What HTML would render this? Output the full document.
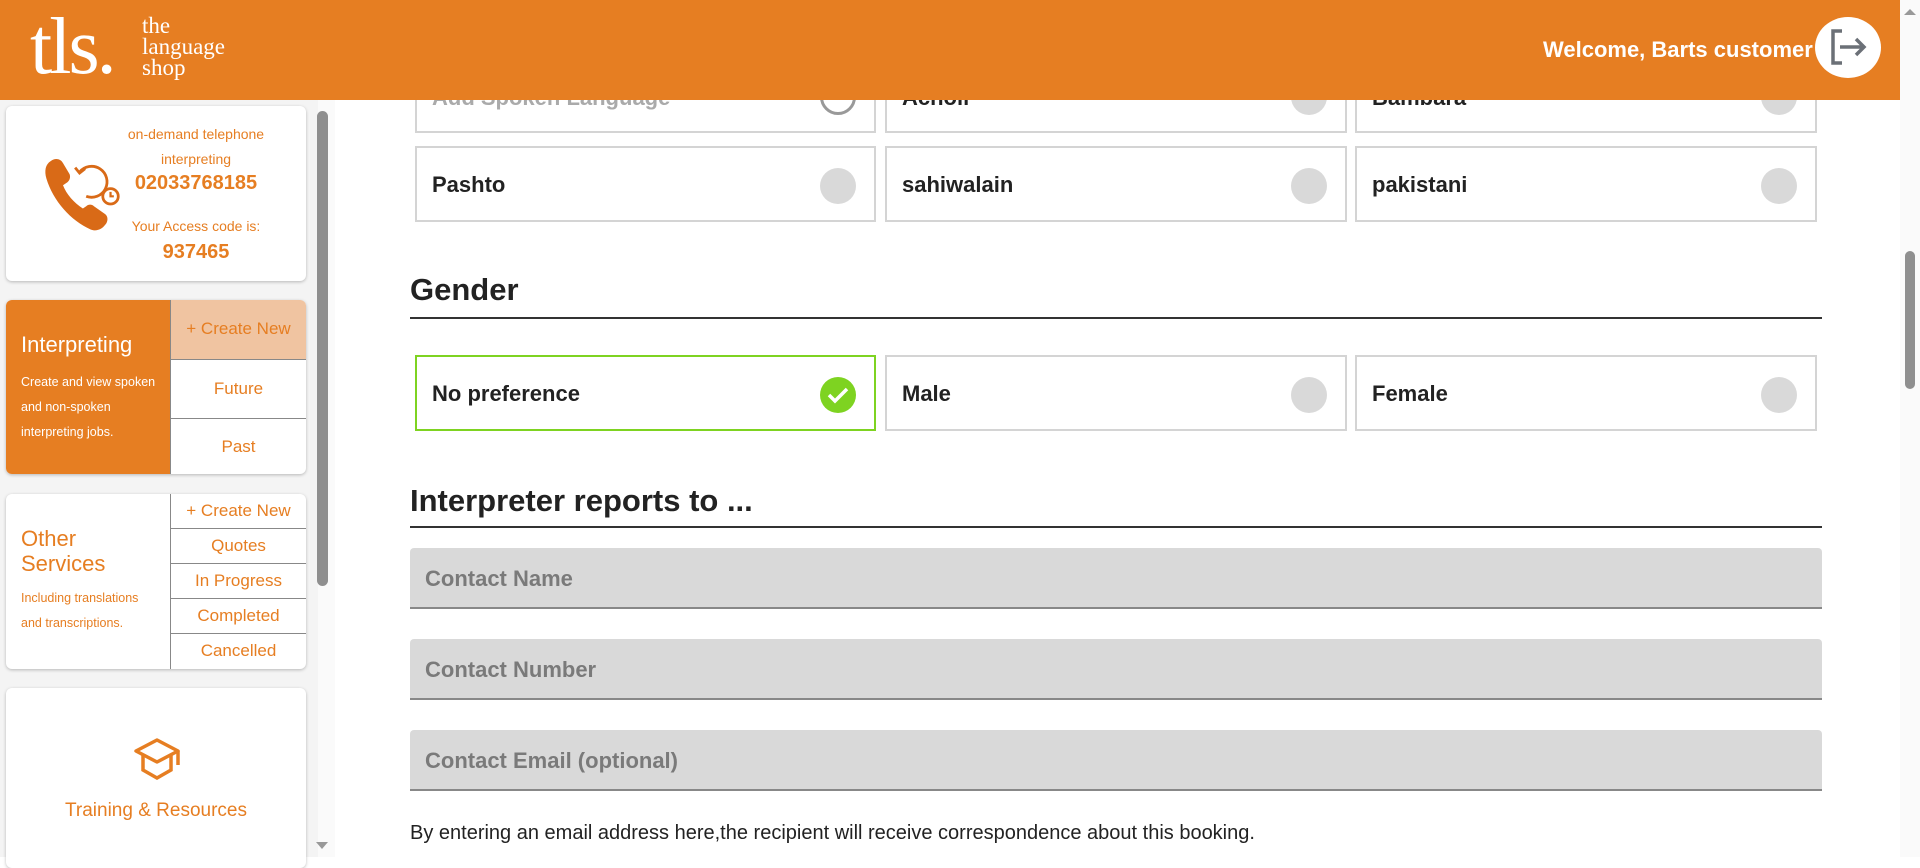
<!DOCTYPE html>
<html><head><meta charset="utf-8"><style>
*{box-sizing:border-box;margin:0;padding:0}
body{width:1920px;height:857px;overflow:hidden;position:relative;background:#fff;font-family:"Liberation Sans",Arial,sans-serif}
.a{position:absolute}
.or{color:#e67e22}
.box{position:absolute;border:2px solid #d4d4d4;background:#fff;height:76px}
.box span{position:absolute;left:15px;top:24px;font-size:22px;color:#222;font-weight:bold}
.dot{position:absolute;right:18px;top:20px;width:36px;height:36px;border-radius:50%;background:#d9d9d9}
.inp{position:absolute;left:410px;width:1412px;height:61px;background:#d9d9d9;border-bottom:2px solid #888;border-radius:4px 4px 0 0}
.inp span{position:absolute;left:15px;top:18px;font-size:22px;color:#7a7a7a;font-weight:bold}
.card{position:absolute;left:6px;width:300px;background:#fff;border-radius:6px;box-shadow:0 1px 3px rgba(0,0,0,.25)}
.cell{position:absolute;left:165px;width:135px;border-top:1px solid #888;color:#e67e22;text-align:center;font-size:17px}
</style></head><body>
<div class="a" style="left:0;top:0;width:318px;height:857px;background:#f4f4f4"></div>
<div class="a" style="left:318px;top:0;width:17px;height:857px;background:#fafafa"></div>
<div class="a" style="left:317px;top:111px;width:11px;height:475px;background:#8f8f8f;border-radius:6px"></div>
<div class="a" style="left:316px;top:842px;width:0;height:0;border-left:6px solid transparent;border-right:6px solid transparent;border-top:7px solid #999"></div>

<div class="card" style="top:106px;height:175px">
 <svg class="a" style="left:36px;top:48px" width="84" height="78" viewBox="0 0 76 70"><path d="M8 6c4-3 9-2 11 2l6 10c1 3 0 6-3 8l-3 2c3 8 10 16 18 21l3-2c2-2 5-2 7 0l10 7c3 2 3 7 0 10-3 4-8 6-13 4C26 60 10 42 4 22 2 15 3 9 8 6z" fill="#d96a17"/><path d="M34 16a14 14 0 1 1 6 22" fill="none" stroke="#d96a17" stroke-width="2.5"/><path d="M30 12l4 5 5-4" fill="none" stroke="#d96a17" stroke-width="2.5"/><circle cx="62" cy="38" r="7" fill="#fff" stroke="#d96a17" stroke-width="2.5"/><path d="M62 34v4h3" fill="none" stroke="#d96a17" stroke-width="2"/></svg>
 <div class="a or" style="left:95px;top:16px;width:190px;text-align:center;font-size:14px;line-height:25px">on-demand telephone<br>interpreting</div>
 <div class="a or" style="left:95px;top:66px;width:190px;text-align:center;font-size:20px;font-weight:bold">02033768185</div>
 <div class="a or" style="left:95px;top:112px;width:190px;text-align:center;font-size:14px">Your Access code is:</div>
 <div class="a or" style="left:95px;top:135px;width:190px;text-align:center;font-size:20px;font-weight:bold">937465</div>
</div>

<div class="card" style="top:300px;height:174px;overflow:hidden">
 <div class="a" style="left:0;top:0;width:165px;height:174px;background:#e67e22;border-right:1px solid #888"></div>
 <div class="a" style="left:15px;top:32px;font-size:22px;color:#fff">Interpreting</div>
 <div class="a" style="left:15px;top:70px;font-size:12.5px;line-height:25px;color:#fff">Create and view spoken<br>and non-spoken<br>interpreting jobs.</div>
 <div class="cell" style="top:0;height:59px;line-height:58px;border-top:0;background:#f0c4a1">+ Create New</div>
 <div class="cell" style="top:59px;height:59px;line-height:58px">Future</div>
 <div class="cell" style="top:118px;height:56px;line-height:55px">Past</div>
</div>

<div class="card" style="top:494px;height:175px;overflow:hidden">
 <div class="a" style="left:164px;top:0;width:1px;height:175px;background:#888"></div>
 <div class="a or" style="left:15px;top:32px;font-size:22px;line-height:25px">Other<br>Services</div>
 <div class="a or" style="left:15px;top:92px;font-size:12.5px;line-height:25px">Including translations<br>and transcriptions.</div>
 <div class="cell" style="top:0;height:34px;line-height:34px;border-top:0">+ Create New</div>
 <div class="cell" style="top:34px;height:35px;line-height:34px">Quotes</div>
 <div class="cell" style="top:69px;height:35px;line-height:34px">In Progress</div>
 <div class="cell" style="top:104px;height:35px;line-height:34px">Completed</div>
 <div class="cell" style="top:139px;height:36px;line-height:34px">Cancelled</div>
</div>

<div class="card" style="top:688px;height:180px">
 <svg class="a" style="left:128px;top:50px" width="52" height="42" viewBox="0 0 52 42"><path d="M2 13L23 2l21 11-21 11z" fill="none" stroke="#e67e22" stroke-width="3.5" stroke-linejoin="round"/><path d="M9 17v15l14 8 14-8V17" fill="none" stroke="#e67e22" stroke-width="3.5"/><path d="M44 13v14" stroke="#e67e22" stroke-width="3.5"/></svg>
 <div class="a or" style="left:0;top:112px;width:300px;text-align:center;font-size:19px">Training &amp; Resources</div>
</div>

<div class="box" style="left:415px;top:57px;width:461px"><span style="color:#aaa;top:26px">Add Spoken Language</span><div class="dot" style="background:#fff;border:3px solid #999;top:20px"></div></div>
<div class="box" style="left:885px;top:57px;width:462px"><span style="top:26px">Acholi</span><div class="dot"></div></div>
<div class="box" style="left:1355px;top:57px;width:462px"><span style="top:26px">Bambara</span><div class="dot"></div></div>

<div class="box" style="left:415px;top:146px;width:461px"><span>Pashto</span><div class="dot"></div></div>
<div class="box" style="left:885px;top:146px;width:462px"><span>sahiwalain</span><div class="dot"></div></div>
<div class="box" style="left:1355px;top:146px;width:462px"><span>pakistani</span><div class="dot"></div></div>

<div class="a" style="left:410px;top:272px;font-size:31px;color:#222;font-weight:bold">Gender</div>
<div class="a" style="left:410px;top:317px;width:1412px;height:2px;background:#333"></div>

<div class="box" style="left:415px;top:355px;width:461px;border-color:#7ed321"><span>No preference</span><div class="dot" style="background:#7ed321"><svg width="36" height="36" viewBox="0 0 36 36"><path d="M9 18l6 6 12-12" fill="none" stroke="#fff" stroke-width="3.5"/></svg></div></div>
<div class="box" style="left:885px;top:355px;width:462px"><span>Male</span><div class="dot"></div></div>
<div class="box" style="left:1355px;top:355px;width:462px"><span>Female</span><div class="dot"></div></div>

<div class="a" style="left:410px;top:483px;font-size:31px;color:#222;font-weight:bold">Interpreter reports to ...</div>
<div class="a" style="left:410px;top:526px;width:1412px;height:2px;background:#333"></div>

<div class="inp" style="top:548px"><span>Contact Name</span></div>
<div class="inp" style="top:639px"><span>Contact Number</span></div>
<div class="inp" style="top:730px"><span>Contact Email (optional)</span></div>
<div class="a" style="left:410px;top:822px;font-size:20px;color:#222">By entering an email address here,the recipient will receive correspondence about this booking.</div>

<div class="a" style="left:1900px;top:0;width:20px;height:857px;background:#fafafa"></div>
<div class="a" style="left:1905px;top:251px;width:10px;height:138px;background:#8f8f8f;border-radius:5px"></div>
<div class="a" style="left:1904px;top:9px;width:0;height:0;border-left:6px solid transparent;border-right:6px solid transparent;border-bottom:6px solid #999"></div>

<div class="a" style="left:0;top:0;width:1900px;height:100px;background:#e67e22"></div>
<div class="a" style="left:30px;top:2px;font-family:'Liberation Serif',serif;font-size:80px;color:#fff;letter-spacing:-3px">tls.</div>
<div class="a" style="left:142px;top:15px;font-family:'Liberation Serif',serif;font-size:23px;line-height:21px;color:#fff">the<br>language<br>shop</div>
<div class="a" style="left:1543px;top:37px;font-size:22px;color:#fff;font-weight:bold">Welcome, Barts customer</div>
<div class="a" style="left:1815px;top:17px;width:66px;height:61px;border-radius:50%;background:#fff"><svg width="66" height="61" viewBox="0 0 66 61"><path d="M27 14h-9v32h9" fill="none" stroke="#6b7077" stroke-width="3.5"/><path d="M25 30h24M41 22l8 8-8 8" fill="none" stroke="#6b7077" stroke-width="3.5"/></svg></div>
</body></html>
